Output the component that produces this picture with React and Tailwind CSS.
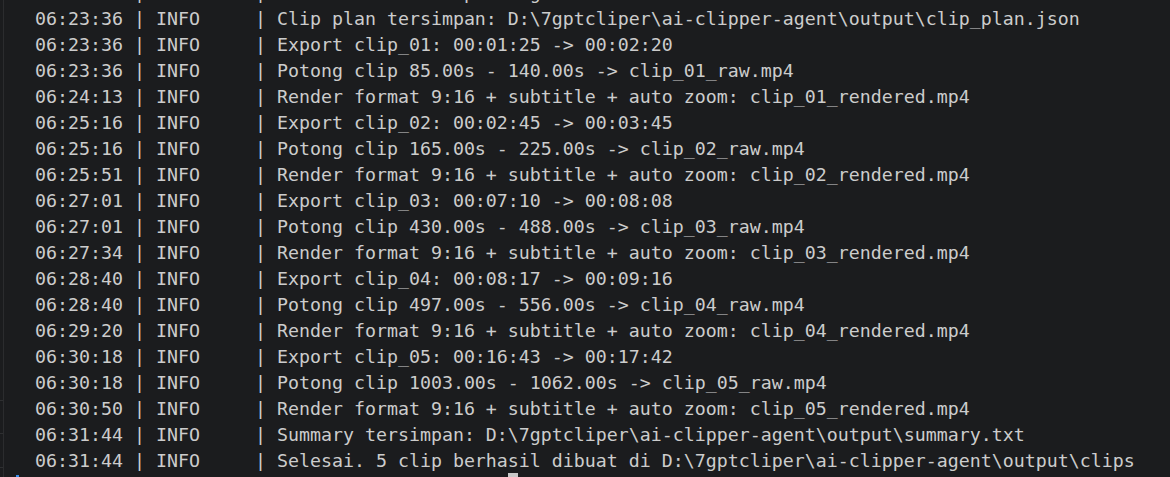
const LINES = [
  ['06:23:36', 'Mulai membuat clip di agent AI'],
  ['06:23:36', 'Clip plan tersimpan: D:\\7gptcliper\\ai-clipper-agent\\output\\clip_plan.json'],
  ['06:23:36', 'Export clip_01: 00:01:25 -> 00:02:20'],
  ['06:23:36', 'Potong clip 85.00s - 140.00s -> clip_01_raw.mp4'],
  ['06:24:13', 'Render format 9:16 + subtitle + auto zoom: clip_01_rendered.mp4'],
  ['06:25:16', 'Export clip_02: 00:02:45 -> 00:03:45'],
  ['06:25:16', 'Potong clip 165.00s - 225.00s -> clip_02_raw.mp4'],
  ['06:25:51', 'Render format 9:16 + subtitle + auto zoom: clip_02_rendered.mp4'],
  ['06:27:01', 'Export clip_03: 00:07:10 -> 00:08:08'],
  ['06:27:01', 'Potong clip 430.00s - 488.00s -> clip_03_raw.mp4'],
  ['06:27:34', 'Render format 9:16 + subtitle + auto zoom: clip_03_rendered.mp4'],
  ['06:28:40', 'Export clip_04: 00:08:17 -> 00:09:16'],
  ['06:28:40', 'Potong clip 497.00s - 556.00s -> clip_04_raw.mp4'],
  ['06:29:20', 'Render format 9:16 + subtitle + auto zoom: clip_04_rendered.mp4'],
  ['06:30:18', 'Export clip_05: 00:16:43 -> 00:17:42'],
  ['06:30:18', 'Potong clip 1003.00s - 1062.00s -> clip_05_raw.mp4'],
  ['06:30:50', 'Render format 9:16 + subtitle + auto zoom: clip_05_rendered.mp4'],
  ['06:31:44', 'Summary tersimpan: D:\\7gptcliper\\ai-clipper-agent\\output\\summary.txt'],
  ['06:31:44', 'Selesai. 5 clip berhasil dibuat di D:\\7gptcliper\\ai-clipper-agent\\output\\clips'],
]

function LogLine({ time, msg }) {
  return (
    <div className="h-[26px] pl-[35px] whitespace-pre">
      {`${time} | INFO     | ${msg}`}
    </div>
  )
}

export default function App() {
  return (
    <div
      className="flex w-[1170px] h-[477px] overflow-hidden bg-[#1b1c1e] text-[#cccccc]"
      style={{ fontFamily: '"DejaVu Sans Mono", "Liberation Mono", monospace' }}
    >
      {/* left panel edge */}
      <div className="flex flex-col w-[4px] shrink-0 border-r border-[#2b2c2e]">
        <div className="h-[400px] shrink-0" />
        <div className="h-[33px] shrink-0 border-t border-[#2e2f31]" />
        <div className="h-[34px] shrink-0 border-t border-[#2e2f31]" />
        <div className="flex-1 border-t border-[#2e2f31]" />
      </div>

      {/* terminal */}
      <div className="flex-1 flex flex-col mt-[-20.2px] ml-[-4px] text-[18.27px] leading-[26px]">
        {LINES.map(([t, m], i) => (
          <LogLine key={i} time={t} msg={m} />
        ))}
        <div className="flex items-start h-[26px]">
          <div className="w-[16px] shrink-0" />
          <div className="w-[3px] h-[3px] mt-[1px] bg-[#3b8eea] shrink-0" />
          <div className="w-[489px] shrink-0" />
          <div className="w-[10px] h-[5px] mt-[-1px] bg-[#c8c8c8] shrink-0" />
        </div>
      </div>
    </div>
  )
}
